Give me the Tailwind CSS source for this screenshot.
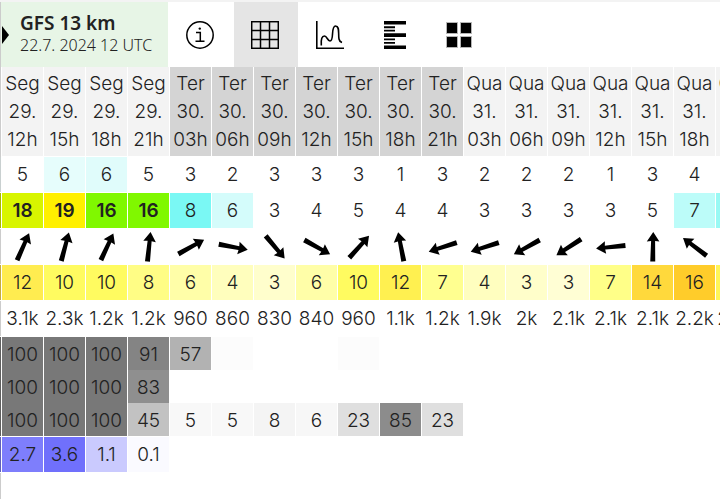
<!DOCTYPE html>
<html lang="pt">
<head>
  <meta charset="UTF-8">
  <meta name="viewport" content="width=device-width, initial-scale=1.0">
  <title>GFS 13 km</title>
  <script src="https://cdn.jsdelivr.net/npm/@tailwindcss/browser@4"></script>
</head>

<body class="bg-white min-h-screen overflow-x-hidden text-[#222]">

  <!-- Header -->
  <header class="flex border-t-2 border-[#f3f3f3] h-[67px]">
    <button type="button" class="flex items-center gap-[11px] w-[168px] shrink-0 pl-px bg-[#e7f5e6] border-l border-[#ccc] text-left font-['Noto_Sans',sans-serif]">
      <svg class="w-[7px] h-[18px] shrink-0" viewBox="0 0 7 18"><path d="M0 0L7 9L0 18Z" /></svg>
      <span class="pb-1">
        <span class="block text-[19px] leading-6 font-semibold whitespace-nowrap">GFS 13 km</span>
        <span class="block text-base leading-5 font-light whitespace-nowrap">22.7. 2024 12 UTC</span>
      </span>
    </button>
    <nav class="flex gap-px ml-px">
      <button type="button" aria-label="Info" class="w-16 pl-[17px]">
        <svg class="w-7 h-7" viewBox="0 0 28 28" fill="none" stroke="#000" stroke-width="1.5">
          <circle cx="14" cy="14" r="13.2" />
          <path d="M10 11.5H14.3V20M9.5 20.2H18.5" />
          <circle cx="13.8" cy="7.6" r="1.2" fill="#000" stroke="none" />
        </svg>
      </button>
      <button type="button" aria-label="Tabela" class="w-16 pl-[17px] bg-[#e5e5e5]">
        <svg class="w-7 h-7" viewBox="0 0 28 28" fill="none" stroke="#000" stroke-width="1.5">
          <rect x="0.7" y="0.7" width="26.6" height="26.6" />
          <path d="M9.5 0V28M18.5 0V28M0 9.5H28M0 18.5H28" />
        </svg>
      </button>
      <button type="button" aria-label="Gráfico" class="w-16 pl-[17px]">
        <svg class="w-7 h-7" viewBox="0 0 28 28" fill="none" stroke="#000" stroke-width="1.6">
          <path d="M0.8 0V27.2H28" />
          <path d="M5.3 24.5C4.800 18 6 15 8.500 15C11 15 11.500 20 14 20C18.500 20 14.500 5 19.500 5C24 5 22 12 23 18C23.400 20.500 24.500 21 26 21.500" />
        </svg>
      </button>
      <button type="button" aria-label="Barras" class="w-16 pl-[17px]">
        <svg class="w-7 h-7" viewBox="0 0 28 28">
          <path d="M3 0H25V3.500H3ZM3 5.200H14V7.200H3ZM3 8.700H14V10.500H3ZM3 12.200H25V16H3ZM3 17.500H14V19.200H3ZM3 21H14V22.800H3ZM3 24.500H25V28H3Z" />
        </svg>
      </button>
      <button type="button" aria-label="Mosaico" class="w-16 pl-[17px]">
        <svg class="w-7 h-7" viewBox="0 0 28 28" stroke="#b5b5b5">
          <path d="M0.5 1.500H11.500V12.500H0.500ZM14.500 1.500H25.500V12.500H14.500ZM0.500 15.500H11.500V26.500H0.500ZM14.500 15.500H25.500V26.500H14.500Z" />
        </svg>
      </button>
    </nav>
  </header>

  <!-- Forecast -->
  <main class="overflow-hidden">
    <table class="table-fixed w-[758px] border-separate border-spacing-0 text-center text-[19px] font-light font-[Inter,sans-serif]">
      <thead id="dias"></thead>
      <tbody id="previsao"></tbody>
    </table>
  </main>

  <script>
    const horas = [
      ['Seg', 29, '12h'], ['Seg', 29, '15h'], ['Seg', 29, '18h'], ['Seg', 29, '21h'],
      ['Ter', 30, '03h'], ['Ter', 30, '06h'], ['Ter', 30, '09h'], ['Ter', 30, '12h'], ['Ter', 30, '15h'], ['Ter', 30, '18h'], ['Ter', 30, '21h'],
      ['Qua', 31, '03h'], ['Qua', 31, '06h'], ['Qua', 31, '09h'], ['Qua', 31, '12h'], ['Qua', 31, '15h'], ['Qua', 31, '18h'], ['Qua', 31, '21h']
    ];

    // each cell is [value, background]; edge is the tail of the column scrolled out on the left
    const linhas = [
      { tipo: 'normal', edge: '#c9d0d0', cells: [[5], [6, '#e6fdfc'], [6, '#e0fcfb'], [5], [3], [2], [3], [3], [3], [1], [3], [2], [2], [2], [1], [3], [4], [4]] },
      { tipo: 'normal', edge: '#a4b800', cells: [[18, '#d8f500'], [19, '#fff000'], [16, '#80f800'], [16, '#80f800'], [8, '#7af8f4'], [6, '#d4fcfb'], [3], [4], [5], [4], [4], [3], [3], [3], [3], [5], [7, '#bcfcf9'], [8, '#98f9f4']] },
      { tipo: 'seta', edge: '#ccc', cells: [[24], [15], [25], [6], [61], [101], [140], [119], [42], [-11], [252], [252], [241], [237], [264], [1], [-53], [-50]] },
      { tipo: 'normal', edge: '#c4ab40', cells: [[12, '#ffec50'], [10, '#fffb60'], [10, '#fffb60'], [8, '#fffd85'], [6, '#fffea8'], [4, '#fffebd'], [3, '#fffecc'], [6, '#fffea8'], [10, '#fffb60'], [12, '#fff050'], [7, '#ffff90'], [4, '#fffebf'], [3, '#fffeca'], [3, '#fffed4'], [7, '#ffff88'], [14, '#ffd93c'], [16, '#ffcc2a'], ['', '#fff558']] },
      { tipo: 'normal', edge: '#ccc', cells: [['3.1k'], ['2.3k'], ['1.2k'], ['1.2k'], [960], [860], [830], [840], [960], ['1.1k'], ['1.2k'], ['1.9k'], ['2k'], ['2.1k'], ['2.1k'], ['2.1k'], ['2.2k'], ['2.2k']] },
      { tipo: 'nuvem', edge: '#606060', cells: [[100, '#787878'], [100, '#787878'], [100, '#787878'], [91, '#848484'], [57, '#b2b2b2'], ['', '#fcfcfc'], [''], [''], ['', '#fcfcfc'], [''], [''], [''], [''], [''], [''], [''], [''], ['']] },
      { tipo: 'nuvem', edge: '#606060', cells: [[100, '#787878'], [100, '#787878'], [100, '#787878'], [83, '#8f8f8f'], [''], [''], [''], [''], [''], [''], [''], [''], [''], [''], [''], [''], [''], ['']] },
      { tipo: 'baixa', edge: '#606060', cells: [[100, '#787878'], [100, '#787878'], [100, '#787878'], [45, '#c2c2c2'], [5, '#f8f8f8'], [5, '#f8f8f8'], [8, '#f4f4f4'], [6, '#f7f7f7'], [23, '#dfdfdf'], [85, '#8c8c8c'], [23, '#dfdfdf'], [''], [''], [''], [''], [''], [''], ['']] },
      { tipo: 'normal', edge: '#6060b8', cells: [['2.7', '#7e7efc'], ['3.6', '#7070fc'], ['1.1', '#cacafe'], ['0.1', '#fafaff'], [''], [''], [''], [''], [''], [''], [''], [''], [''], [''], [''], [''], [''], ['']] },
      { tipo: 'normal', edge: '#ccc', cells: [] }
    ];

    const classes = {
      normal: 'h-9 p-0 pt-0.5 border-r border-b border-white bg-clip-padding',
      seta: 'h-9 p-0 border-r border-b border-white bg-clip-padding',
      nuvem: 'h-[33px] p-0 pt-1 border-r border-white bg-clip-padding',
      baixa: 'h-[34px] p-0 pt-1 border-r border-b border-white bg-clip-padding'
    };

    function seta(graus) {
      return `<svg class="mx-auto w-8 h-8" viewBox="-16 -16 32 32"><path transform="rotate(${graus})" d="M0 -15L6.300 -5.500L2 -6L2.500 14.500H-2.500L-2 -6L-6.300 -5.500Z" /></svg>`;
    }

    document.getElementById('dias').innerHTML = `
      <tr>
        <td class="w-0.5 p-0 border-r border-white bg-[#ccc] bg-clip-padding"></td>
        ${horas.map(([dia, data, hora]) => `
          <th scope="col" class="w-[42px] h-[90px] p-0 border-r border-b border-white bg-clip-padding font-light leading-7 ${dia === 'Ter' ? 'bg-[#d4d4d4]' : 'bg-[#f3f3f3]'}">${dia}<br>${data}.<br>${hora}</th>`).join('')}
      </tr>`;

    document.getElementById('previsao').innerHTML = linhas.map((linha, i) => `
      <tr>
        <td class="${classes[linha.tipo]}" style="background-color: ${linha.edge}"></td>
        ${linha.cells.map(([valor, cor]) => `
          <td class="${classes[linha.tipo]} ${i === 1 && valor > 15 ? 'font-semibold' : ''}" style="background-color: ${cor || '#fff'}">${linha.tipo === 'seta' ? seta(valor) : valor}</td>`).join('')}
      </tr>`).join('');
  </script>

</body>
</html>
